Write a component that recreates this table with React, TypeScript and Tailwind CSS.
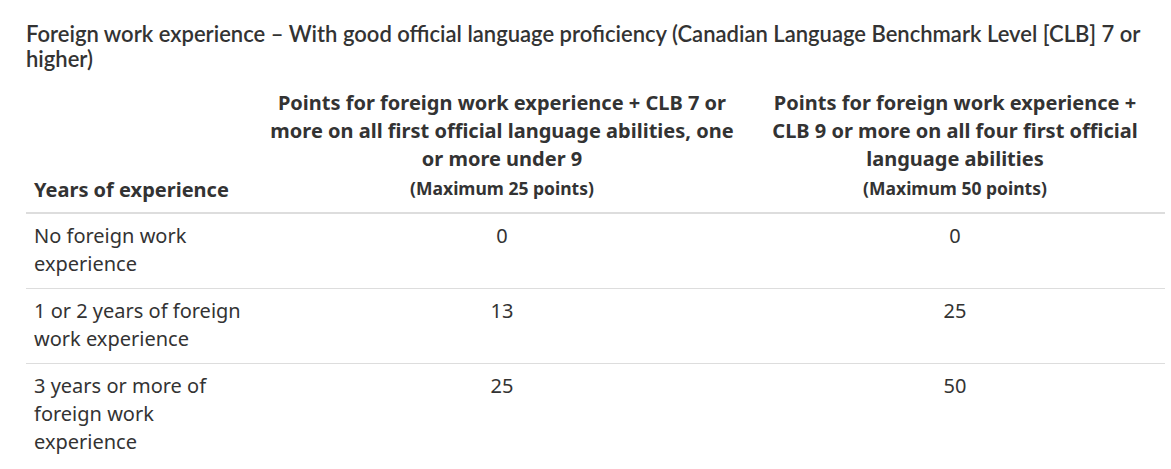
const rows = [
  { label: 'No foreign work experience', a: '0', b: '0' },
  { label: '1 or 2 years of foreign work experience', a: '13', b: '25' },
  { label: '3 years or more of foreign work experience', a: '25', b: '50' },
];

export default function App() {
  return (
    <div className="bg-white text-[#333] px-[26px] pt-[21px] w-[1165px]">
      <h2 className="font-['Lato',sans-serif] text-[22px] leading-[25px] font-semibold text-[#333] w-[1140px]">
        Foreign work experience – With good official language proficiency (Canadian Language Benchmark Level [CLB] 7 or
        higher)
      </h2>
      <table className="mt-[10px] w-[1139px] border-collapse font-['Noto_Sans',sans-serif]">
        <thead>
          <tr className="border-b-2 border-[#ddd]">
            <th className="w-[233px] px-2 pt-2 pb-[8px] align-bottom text-left text-[20px] leading-[28px] font-bold">
              Years of experience
            </th>
            <th className="w-[486px] px-2 pt-2 pb-[8px] align-bottom text-center text-[20px] leading-[28px] font-bold">
              Points for foreign work experience + CLB 7 or
              <br />
              more on all first official language abilities, one
              <br />
              or more under 9
              <div className="text-[17.5px] leading-[31px]">(Maximum 25 points)</div>
            </th>
            <th className="px-2 pt-2 pb-[8px] align-bottom text-center text-[20px] leading-[28px] font-bold">
              Points for foreign work experience +
              <br />
              CLB 9 or more on all four first official
              <br />
              language abilities
              <div className="text-[17.5px] leading-[31px]">(Maximum 50 points)</div>
            </th>
          </tr>
        </thead>
        <tbody>
          {rows.map((r, i) => (
            <tr key={i} className="border-b border-[#ddd] last:border-b-0">
              <td className="px-2 pt-2 pb-[10px] align-top text-[20px] leading-[28px]">{r.label}</td>
              <td className="px-2 pt-2 pb-[10px] align-top text-center text-[20px] leading-[28px]">{r.a}</td>
              <td className="px-2 pt-2 pb-[10px] align-top text-center text-[20px] leading-[28px]">{r.b}</td>
            </tr>
          ))}
        </tbody>
      </table>
    </div>
  );
}
